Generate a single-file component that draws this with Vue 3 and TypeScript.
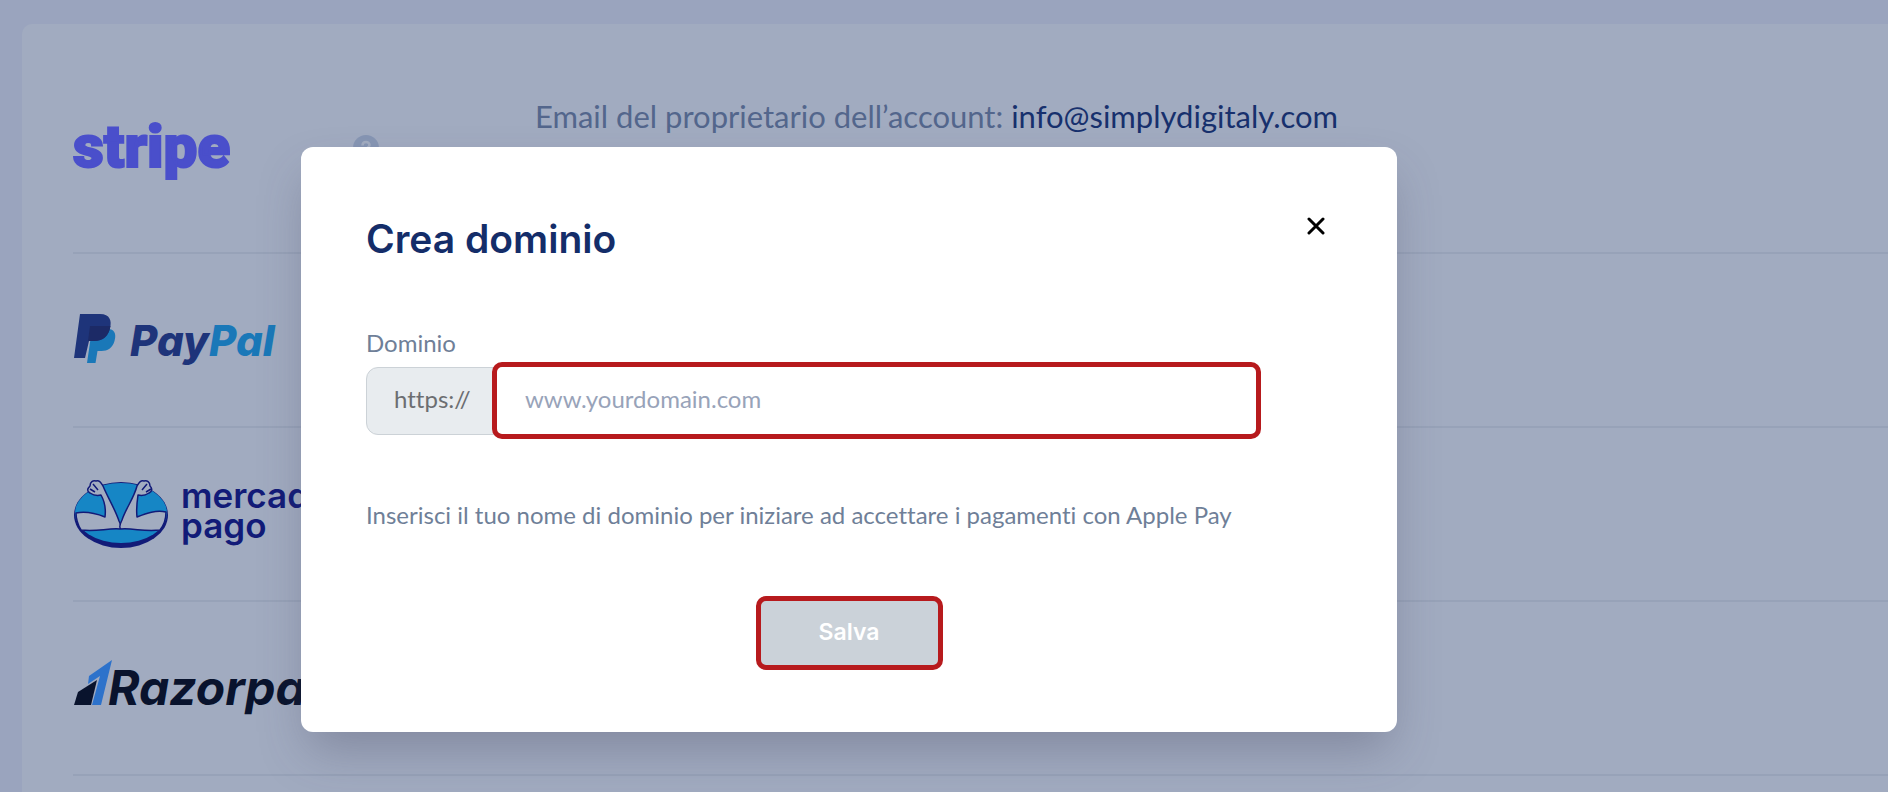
<script setup lang="ts">
import { ref } from 'vue'

const domain = ref<string>('')
const open = ref<boolean>(true)
</script>

<template>
  <div class="page">
    <main class="card">
      <ul class="providers">
        <li class="provider provider-first">
          <svg class="logo" width="240" height="80" viewBox="0 0 240 80" role="img" aria-label="Stripe">
            <text class="stripe" x="0" y="59">stripe</text>
          </svg>
          <svg class="help" width="26" height="26" viewBox="0 0 26 26" role="img" aria-label="Aiuto">
            <circle cx="13" cy="13" r="13" fill="#8695b3" />
            <path d="M9.500 10.500c0-5 7-4.500 7-.5 0 2.500-3.500 3-3.500 5.500M13 18v2" fill="none" stroke="#a2acc0" stroke-width="2.500" />
          </svg>
          <p class="owner">Email del proprietario dell’account: <strong>info@simplydigitaly.com</strong></p>
        </li>
        <li class="provider">
          <svg class="logo" width="240" height="80" viewBox="0 0 240 80" role="img" aria-label="PayPal">
            <path d="M14 63 19 29h17c7 1 7 7 5.500 12-2 7-7 10-13 10h-4l-2 12z" fill="#1a78b8" />
            <path d="M7 14h20c10 0 12 7 10 14-2 9-8 13-16 13h-5L12 58H1z" fill="#1e347a" />
            <path d="M17 26h20.500C36 36 30 41 21 41h-6z" fill="#1c2a66" />
            <text class="paypal" x="57" y="56" fill="#1e347a">Pay<tspan fill="#1a78b8">Pal</tspan></text>
          </svg>
        </li>
        <li class="provider">
          <svg class="logo" width="240" height="80" viewBox="0 0 240 80" role="img" aria-label="Mercado Pago">
            <ellipse cx="48" cy="41" rx="47" ry="33" fill="#121b78" />
            <ellipse cx="48" cy="39" rx="46" ry="30" fill="#1686c5" />
            <g fill="#a2acc0" stroke="#121b78" stroke-width="1.500" stroke-linejoin="round">
              <path d="M3 39c10-2 19 0 29 4 1-8 0-15-4-22-4 1-8 0-11-2-4-2-2-5 0-7 0-4 3-6 6-5 4-1 5 2 7 5 5 12 12 23 16 35 2 4 3 7 1 8-13-1-23 3-39 1-3-5-5-10-5-17z" />
              <path d="M93 38c-10-2-19 1-29 5-1-8 0-15 1-22 4 1 8 0 11-2 4-2 3-5 1-7 0-4-3-6-6-5-4-1-5 2-7 5-3 12-11 22-15 34-2 4-3 8-1 9 13-1 23 3 39 1 4-5 6-11 6-18z" />
              <path d="m17 15 5 3M20 10l5 6M78 15l-5 3M74 10l-5 6" fill="none" />
            </g>
            <text class="mercado" x="108" y="34">mercado</text>
            <text class="mercado" x="108" y="64">pago</text>
          </svg>
        </li>
        <li class="provider">
          <svg class="logo" width="240" height="80" viewBox="0 0 240 80" role="img" aria-label="Razorpay">
            <path d="M16 28 39 12 28 57H19l8-29-12 8z" fill="#2d72cb" />
            <path d="M5 44 24 32 18 57H1z" fill="#09132d" />
            <text class="razorpay" x="35" y="57">Razorpay</text>
          </svg>
        </li>
      </ul>
    </main>

    <div v-if="open" class="overlay">
      <section class="modal" role="dialog" aria-modal="true" aria-labelledby="modal-title">
        <header class="modal-head">
          <h1 id="modal-title">Crea dominio</h1>
          <button class="close" type="button" aria-label="Chiudi" @click="open = false">
            <svg width="18" height="18" viewBox="0 0 18 18" aria-hidden="true">
              <path d="M2 2 16 16M16 2 2 16" stroke="#000" stroke-width="3" stroke-linecap="round" />
            </svg>
          </button>
        </header>
        <form @submit.prevent>
          <label for="domain">Dominio</label>
          <div class="field">
            <span class="prefix">https://</span>
            <input id="domain" v-model="domain" type="text" placeholder="www.yourdomain.com" />
          </div>
          <p class="hint">Inserisci il tuo nome di dominio per iniziare ad accettare i pagamenti con Apple Pay</p>
          <button class="save" type="submit">Salva</button>
        </form>
      </section>
    </div>
  </div>
</template>

<style scoped>
.page {
  position: relative;
  box-sizing: border-box;
  height: 100vh;
  padding: 24px 0 0 22px;
  overflow: hidden;
  background: #9aa4be;
  font-family: Lato, "Open Sans", sans-serif;
  font-variant-ligatures: none;
}

.card {
  min-height: 100%;
  box-sizing: border-box;
  padding: 20px 0 0 51px;
  border-radius: 10px 0 0 0;
  background: #a1abc0;
}

.providers {
  margin: 0;
  padding: 0;
  list-style: none;
}

.provider {
  display: grid;
  grid-template-columns: 280px 182px 1fr;
  align-items: center;
  box-sizing: border-box;
  height: 174px;
  border-bottom: 2px solid #97a2b8;
}

.provider-first {
  height: 210px;
}

.logo,
.help {
  display: block;
}

.owner {
  align-self: start;
  margin: 55px 0 0;
  color: #53668c;
  font-size: 31px;
  line-height: 34px;
}

.owner strong {
  color: #17306d;
  font-weight: 400;
}

.stripe {
  fill: #4a4fcb;
  stroke: #4a4fcb;
  stroke-width: 2px;
  font: 900 60px Roboto, sans-serif;
}

.paypal {
  font: italic 800 42px Inter, sans-serif;
}

.mercado {
  fill: #121b78;
  font: 600 35px Inter, sans-serif;
}

.razorpay {
  fill: #09132d;
  font: italic 700 48px Inter, sans-serif;
}

.overlay {
  position: absolute;
  inset: 0;
  padding: 147px 26% 0 301px;
}

.modal {
  box-sizing: border-box;
  min-height: 585px;
  padding: 67px 65px 62px;
  border-radius: 12px;
  background: #fff;
  box-shadow: 0 24px 48px -8px rgba(70, 70, 95, 0.35);
}

.modal-head {
  display: flex;
  align-items: flex-start;
  justify-content: space-between;
}

h1 {
  margin: 0;
  color: #142d69;
  font: 600 39px/50px Inter, sans-serif;
}

.close {
  display: flex;
  padding: 3px 7px;
  border: 0;
  background: none;
  cursor: pointer;
}

form {
  display: flex;
  flex-direction: column;
  align-items: flex-start;
}

label {
  margin-top: 65px;
  color: #6f7f98;
  font-size: 24px;
  line-height: 28px;
}

.field {
  display: flex;
  align-items: center;
  width: 100%;
  margin-top: 5px;
  padding-right: 71px;
  box-sizing: border-box;
}

.prefix {
  box-sizing: border-box;
  width: 134px;
  height: 68px;
  margin-right: -8px;
  padding-left: 27px;
  border: 1px solid #ccd2d7;
  border-radius: 12px 0 0 12px;
  background: #e8ecef;
  color: #6c6e71;
  font-size: 24px;
  line-height: 62px;
}

input {
  flex: 1;
  min-width: 0;
  box-sizing: border-box;
  height: 77px;
  padding: 0 28px 4px;
  border: 5px solid #b71a1d;
  border-radius: 10px;
  outline: 0;
  background: #fff;
  color: #142d69;
  font: 24px/28px Lato, sans-serif;
}

input::placeholder {
  color: #98a3b9;
  opacity: 1;
}

.hint {
  margin: 62px 0 0;
  color: #6f7f98;
  font-size: 24px;
  line-height: 28px;
}

.save {
  align-self: center;
  width: 187px;
  height: 74px;
  margin-top: 67px;
  padding: 0 0 2px;
  border: 5px solid #b71a1d;
  border-radius: 10px;
  background: #cbd2d9;
  color: #fff;
  font: 600 23px/28px Inter, sans-serif;
}
</style>
